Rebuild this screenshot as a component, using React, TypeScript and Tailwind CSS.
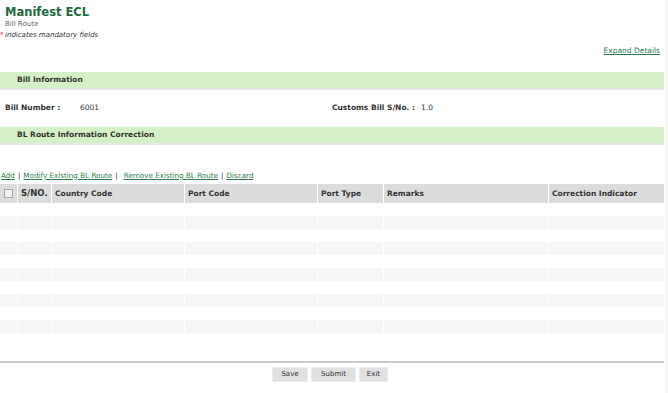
import { useState } from "react";

const columns = [
  { label: "S/NO.", width: "w-[34px]" },
  { label: "Country Code", width: "w-[133px]" },
  { label: "Port Code", width: "w-[133px]" },
  { label: "Port Type", width: "w-[66px]" },
  { label: "Remarks", width: "w-[165px]" },
  { label: "Correction Indicator", width: "flex-1" },
];

function SectionBar({ title }: { title: string }) {
  return (
    <div className="h-[18px] bg-[#d5f0c6] border-b-2 border-[#e6e6e6] flex items-center pl-[17px]">
      <span className="font-bold text-[7.5px] text-[#333]">{title}</span>
    </div>
  );
}

function App() {
  const [checked, setChecked] = useState(false);
  const rows = Array.from({ length: 10 }, (_, i) => i);

  return (
    <div className="w-[667px] min-h-[393px] bg-white border-r border-[#ececec] font-['DejaVu_Sans',Verdana,sans-serif] text-[#333]">
      <div className="w-[664px]">
        {/* Header */}
        <div className="pt-[4px] pl-[5px]">
          <h1 className="text-[11.5px] leading-[16px] font-bold text-[#1c6b3b]">Manifest ECL</h1>
          <div className="text-[7px] leading-[9px] text-[#666]">Bill Route</div>
        </div>
        <div className="flex items-center h-[11px] mt-[1px]">
          <span className="text-[#e0245e] text-[7px] leading-none w-[5px]">*</span>
          <span className="italic text-[7px] text-[#333]">indicates mandatory fields</span>
        </div>
        <div className="flex justify-end pr-[4px] mt-[4px] h-[12px] items-center">
          <a className="text-[7.5px] text-[#2c7a4b] underline cursor-pointer">Expand Details</a>
        </div>

        <div className="mt-[15px]">
          <SectionBar title="Bill Information" />
        </div>

        <div className="flex items-center h-[20px] mt-[8px] text-[7.5px]">
          <span className="font-bold w-[80px] pl-[5px]">Bill Number :</span>
          <span className="w-[252px]">6001</span>
          <span className="font-bold w-[89px]">Customs Bill S/No. :</span>
          <span>1.0</span>
        </div>

        <div className="mt-[9px]">
          <SectionBar title="BL Route Information Correction" />
        </div>

        <div className="flex items-center h-[12px] mt-[25px] pl-[1px] text-[7.2px] text-[#333] gap-[3px]">
          <a className="text-[#2c7a4b] underline">Add</a>
          <span>|</span>
          <a className="text-[#2c7a4b] underline">Modify Existing BL Route</a>
          <span>|</span>
          <a className="text-[#2c7a4b] underline ml-[3px]">Remove Existing BL Route</a>
          <span>|</span>
          <a className="text-[#2c7a4b] underline">Discard</a>
        </div>

        {/* Table */}
        <div className="mt-[2px]">
          <div className="flex h-[19px] bg-[#dcdcdc] text-[7.5px] font-bold text-[#333]">
            <div className="w-[18px] border-r border-white flex items-center justify-center">
              <input
                type="checkbox"
                checked={checked}
                onChange={() => setChecked(!checked)}
                className="appearance-none w-[9px] h-[9px] m-0 border border-[#a8a8a8] bg-[#f2f2f2] checked:bg-[#9a9a9a]"
              />
            </div>
            {columns.map((c) => (
              <div
                key={c.label}
                className={`${c.width} border-r border-white last:border-r-0 flex items-center pl-[3px] ${c.label === "S/NO." ? "text-[8.5px]" : ""}`}
              >
                {c.label}
              </div>
            ))}
          </div>
          {rows.map((r) => (
            <div key={r} className={`flex h-[13px] ${r % 2 === 1 ? "bg-[#f6f6f6]" : "bg-white"}`}>
              <div className="w-[18px] border-r border-white" />
              {columns.map((c) => (
                <div key={c.label} className={`${c.width} border-r border-white last:border-r-0`} />
              ))}
            </div>
          ))}
        </div>

        {/* Footer */}
        <div className="mt-[28px] border-t-2 border-[#c8c8c8]" />
        <div className="flex justify-center gap-[3px] mt-[4px] pr-[4px]">
          <button className="h-[15px] w-[36px] bg-[#e0e0e0] text-[7px] text-[#333] border border-[#ececec]">Save</button>
          <button className="h-[15px] w-[45px] bg-[#e0e0e0] text-[7px] text-[#333] border border-[#ececec]">Submit</button>
          <button className="h-[15px] w-[29px] bg-[#e0e0e0] text-[7px] text-[#333] border border-[#ececec]">Exit</button>
        </div>
      </div>
    </div>
  );
}

export default App;
